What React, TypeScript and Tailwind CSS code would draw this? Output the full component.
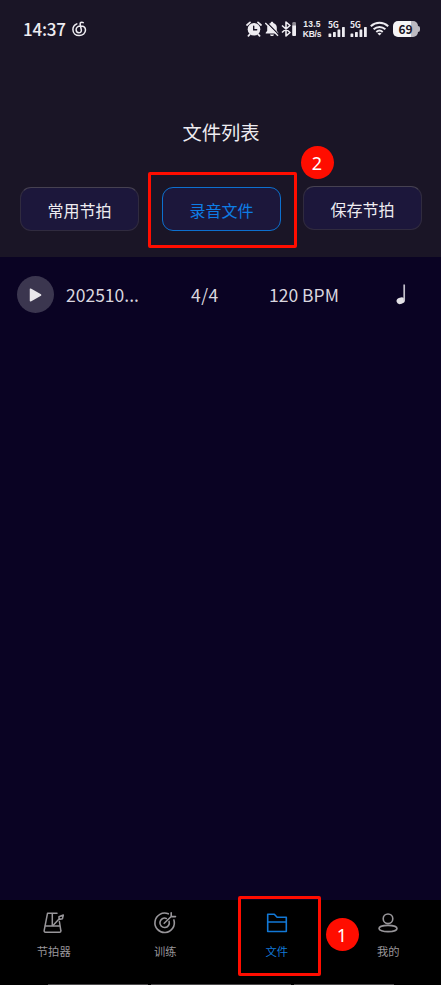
import type { ReactNode } from 'react'

const tabs = [
  { label: '节拍器', icon: <MetronomeIcon />, active: false },
  { label: '训练', icon: <TargetIcon />, active: false },
  { label: '文件', icon: <FolderIcon />, active: true },
  { label: '我的', icon: <UserIcon />, active: false },
]

function CloudMusicIcon() {
  return (
    <svg width="15" height="16" viewBox="0 0 15 16" fill="none" stroke="#eeecf1" strokeWidth="1.5" strokeLinecap="round">
      <path d="M4.800 2.900C2.500 3.900.9 6 .9 8.600c0 3.500 2.700 6 6.300 6s6.300-2.500 6.300-5.500c0-2.500-2-4.200-4.800-4.200-2.700 0-4.600 1.700-4.600 3.900 0 1.700 1.200 2.900 2.800 2.900s2.700-1.200 2.400-2.800L8.200 3.500c-.4-1.800 1.300-2.900 3-1.900" />
    </svg>
  )
}

function AlarmIcon() {
  return (
    <svg width="16" height="16" viewBox="0 0 16 16" fill="none" strokeLinecap="round">
      <circle cx="8" cy="8.3" r="6.300" fill="#eeecf1" />
      <path d="M1 4 4 1.4M15 4l-3-2.6M3.8 13.3l-1.4 1.5M12.2 13.3l1.4 1.5" stroke="#eeecf1" strokeWidth="1.7" />
      <path d="M7.700 5.200v3.600h3" stroke="#1a1526" strokeWidth="1.400" />
    </svg>
  )
}

function BellOffIcon() {
  return (
    <svg width="14" height="16" viewBox="0 0 14 16">
      <path d="M7 .8c.8 0 1.300.5 1.300 1.200 2.300.6 3.500 2.300 3.500 4.400v3.400l1.500 2v.8H.7v-.8l1.500-2V6.400C2.200 4.300 3.400 2.600 5.700 2c0-.7.5-1.200 1.300-1.200ZM5 13.500h4c-.2 1-1 1.600-2 1.600s-1.800-.6-2-1.600Z" fill="#eeecf1" />
      <path d="M1.500 1.300 14 13.800" stroke="#1a1526" strokeWidth="1.300" />
      <path d="M.3 2 13 14.700" stroke="#eeecf1" strokeWidth="1.400" />
    </svg>
  )
}

function BluetoothIcon() {
  return (
    <svg width="16" height="16" viewBox="0 0 16 16" fill="none">
      <path d="m1 4.500 8 7-4 3.500V1l4 3.500-8 7" stroke="#eeecf1" strokeWidth="1.600" strokeLinejoin="round" />
      <rect x="11.300" y="1" width="3.700" height="14" rx="1.300" fill="#8d8992" />
      <path d="M11.300 4.500H15v9.200c0 .8-.5 1.300-1.300 1.300h-1.100c-.8 0-1.300-.5-1.300-1.300Z" fill="#eeecf1" />
    </svg>
  )
}

function Signal() {
  return (
    <div className="flex h-[16px] w-[18px] flex-col justify-between">
      <span className="h-[6px] text-[8.5px] leading-[6px] font-bold tracking-[-0.2px]">5G</span>
      <svg width="18" height="10" viewBox="0 0 18 10" fill="#eeecf1">
        <rect x=".5" y="6.500" width="2.800" height="3.500" rx=".6" />
        <rect x="5" y="5" width="2.800" height="5" rx=".6" />
        <rect x="9.500" y="2.500" width="2.800" height="7.500" rx=".6" />
        <rect x="14" y="0" width="2.800" height="10" rx=".6" />
      </svg>
    </div>
  )
}

function WifiIcon() {
  return (
    <svg width="19" height="15" viewBox="0 0 19 15" fill="none" stroke="#eeecf1" strokeWidth="2">
      <path d="M.8 5.200c5-4.600 12.400-4.600 17.400 0M3.600 8.200c3.400-3.100 8.400-3.100 11.800 0M6.300 11c1.900-1.700 4.500-1.700 6.400 0" />
      <path d="m7.500 12.400 2 2.200 2-2.200c-1.200-1-2.800-1-4 0Z" fill="#eeecf1" stroke="none" />
    </svg>
  )
}

function MetronomeIcon() {
  return (
    <svg width="24" height="24" viewBox="0 0 24 24" fill="none" stroke="currentColor" strokeWidth="1.500" strokeLinejoin="round" strokeLinecap="round">
      <path d="M15 2.300H5.500L2.200 19.300c-.2 1.200.2 1.900 1.300 1.900h14c1.100 0 1.600-.7 1.300-1.900L17.400 10.500M2.900 15h15.200M10.300 2.500V15" />
      <path d="m11 14.500 6.500-7M17 5.700l4.300-1.700-.8 3.700-3.500.9Z" />
    </svg>
  )
}

function TargetIcon() {
  return (
    <svg width="24" height="24" viewBox="0 0 24 24" fill="none" stroke="currentColor" strokeWidth="1.600" strokeLinecap="round" strokeLinejoin="round">
      <path d="M15.300 2.800A9.700 9.700 0 1 0 20.900 8.900" />
      <path d="M13.300 7.400a4.700 4.700 0 1 0 2.800 3" />
      <path d="m11.200 12.300 7-6.800M18.200 1.800v3.800h4.300" />
    </svg>
  )
}

function FolderIcon() {
  return (
    <svg width="24" height="24" viewBox="0 0 24 24" fill="none" stroke="currentColor" strokeWidth="1.600" strokeLinejoin="round">
      <path d="M2.700 3.200h6.600l2.800 3h9.200v14.300H2.700ZM2.700 11h18.600" />
    </svg>
  )
}

function UserIcon() {
  return (
    <svg width="24" height="24" viewBox="0 0 24 24" fill="none" stroke="currentColor" strokeWidth="1.600">
      <circle cx="12" cy="7.800" r="4.800" />
      <ellipse cx="12" cy="17.500" rx="9" ry="3.100" />
    </svg>
  )
}

function Marker({ children, className }: { children: ReactNode; className: string }) {
  return (
    <span className={`absolute z-10 flex h-[33px] w-[33px] items-center justify-center rounded-full bg-[#ff0d00] font-['Noto_Sans','Noto_Sans_CJK_SC',sans-serif] text-[18px] leading-none text-white ${className}`}>
      {children}
    </span>
  )
}

export default function App() {
  return (
    <div className="flex h-[985px] w-[441px] flex-col overflow-hidden bg-[#0a0323] font-['Noto_Sans_CJK_SC',sans-serif] text-[#eeecf1]">
      <header className="h-[257px] shrink-0 bg-[#1a1526]">
        {/* 状态栏 */}
        <div className="flex h-[57px] items-center pl-[23px]">
          <span className="w-[49px] text-[17px] leading-none font-medium tracking-[-0.2px]">14:37</span>
          <CloudMusicIcon />
          <div className="ml-[159px] flex items-center">
            <AlarmIcon />
            <span className="ml-[3px]"><BellOffIcon /></span>
            <span className="ml-[2px]"><BluetoothIcon /></span>
            <div className="ml-[5px] flex w-[20px] flex-col items-center font-['Liberation_Sans',sans-serif] text-[8.5px] leading-[10px] font-bold">
              <span className="tracking-[0.3px]">13.5</span>
              <span className="tracking-[-0.2px]">KB/s</span>
            </div>
            <div className="ml-[6px] flex gap-[4px]">
              <Signal />
              <Signal />
            </div>
            <span className="ml-[2px]"><WifiIcon /></span>
            <div className="ml-[4px] flex items-center">
              <div className="flex h-[16px] w-[25px] items-center justify-center rounded-[5px] bg-linear-to-r from-[#f6f5f7] from-70% to-[#bcb9c0] to-70% text-[12px] leading-none font-bold text-[#1a1526]">69</div>
              <div className="h-[6px] w-[1.5px] rounded-r bg-[#bcb9c0]" />
            </div>
          </div>
        </div>

        <h1 className="mt-[60px] pl-px text-center text-[19.3px] leading-[30px] font-normal">文件列表</h1>

        {/* 分类按钮 */}
        <div className="mt-[40px] flex gap-[23px] pl-[20px] text-[16px]">
          <button className="h-[44px] w-[119px] rounded-[11px] border border-[#302b3f] border-t-[#464151] bg-[#1c173b] pt-px">常用节拍</button>
          <div className="relative">
            <button className="h-[44px] w-[119px] rounded-[11px] border border-[#0d70cf] bg-[#1c173b] pt-px text-[#0e7de5]">录音文件</button>
            <div className="absolute -top-[15px] -left-[14px] h-[76px] w-[149px] rounded-[2px] border-3 border-[#ff0d00]" />
            <Marker className="top-[-41px] left-[138.5px]">2</Marker>
          </div>
          <button className="-mt-px -ml-px h-[44px] w-[119px] rounded-[11px] border border-[#302b3f] border-t-[#464151] bg-[#1c173b] pt-px">保存节拍</button>
        </div>
      </header>

      <main className="flex-1">
        <div className="flex h-[75px] items-center pl-[17px] text-[17.5px] text-[#d9d6df]">
          <button className="flex h-[37px] w-[37px] items-center justify-center rounded-full bg-[#3b364f]">
            <svg width="13" height="14" viewBox="0 0 13 14" fill="#e9e7ec" stroke="#e9e7ec" strokeWidth="1.500" strokeLinejoin="round">
              <path d="M1.500 1.200v11.600L11.600 7Z" />
            </svg>
          </button>
          <span className="ml-[12px] w-[125px] pt-[2px]">202510...</span>
          <span className="w-[78px] pt-[2px] tracking-[0.5px]">4/4</span>
          <span className="w-[127px] pt-[2px]">120 BPM</span>
          <svg width="10" height="21" viewBox="0 0 10 21">
            <ellipse cx="4.700" cy="16.700" rx="4.200" ry="3.200" fill="#e3e1e6" transform="rotate(-18 4.700 16.700)" />
            <path d="M8.200 .5v16" stroke="#c3c0ca" strokeWidth="1.700" />
          </svg>
        </div>
      </main>

      {/* 底部导航 */}
      <nav className="flex h-[85px] shrink-0 flex-col justify-between bg-black">
        <div className="-ml-[2px] flex w-[446px]">
          {tabs.map((tab) => (
            <div key={tab.label} className={`relative flex flex-1 flex-col items-center pt-[11px] ${tab.active ? 'text-[#1278d6]' : 'text-[#98969a]'}`}>
              {tab.icon}
              <span className="mt-[8px] text-[11.3px] leading-[17px]">{tab.label}</span>
              {tab.active && (
                <>
                  <div className="absolute top-[-4px] left-[17px] h-[80px] w-[83px] rounded-[2px] border-3 border-[#ff0d00]" />
                  <Marker className="top-[18px] left-[104.5px]">1</Marker>
                </>
              )}
            </div>
          ))}
        </div>
        <div className="flex gap-[3px] pl-[48px]">
          <div className="h-px w-[100px] bg-[#4b494b]" />
          <div className="h-px w-[140px] bg-[#4b494b]" />
          <div className="h-px w-[100px] bg-[#4b494b]" />
        </div>
      </nav>
    </div>
  )
}
